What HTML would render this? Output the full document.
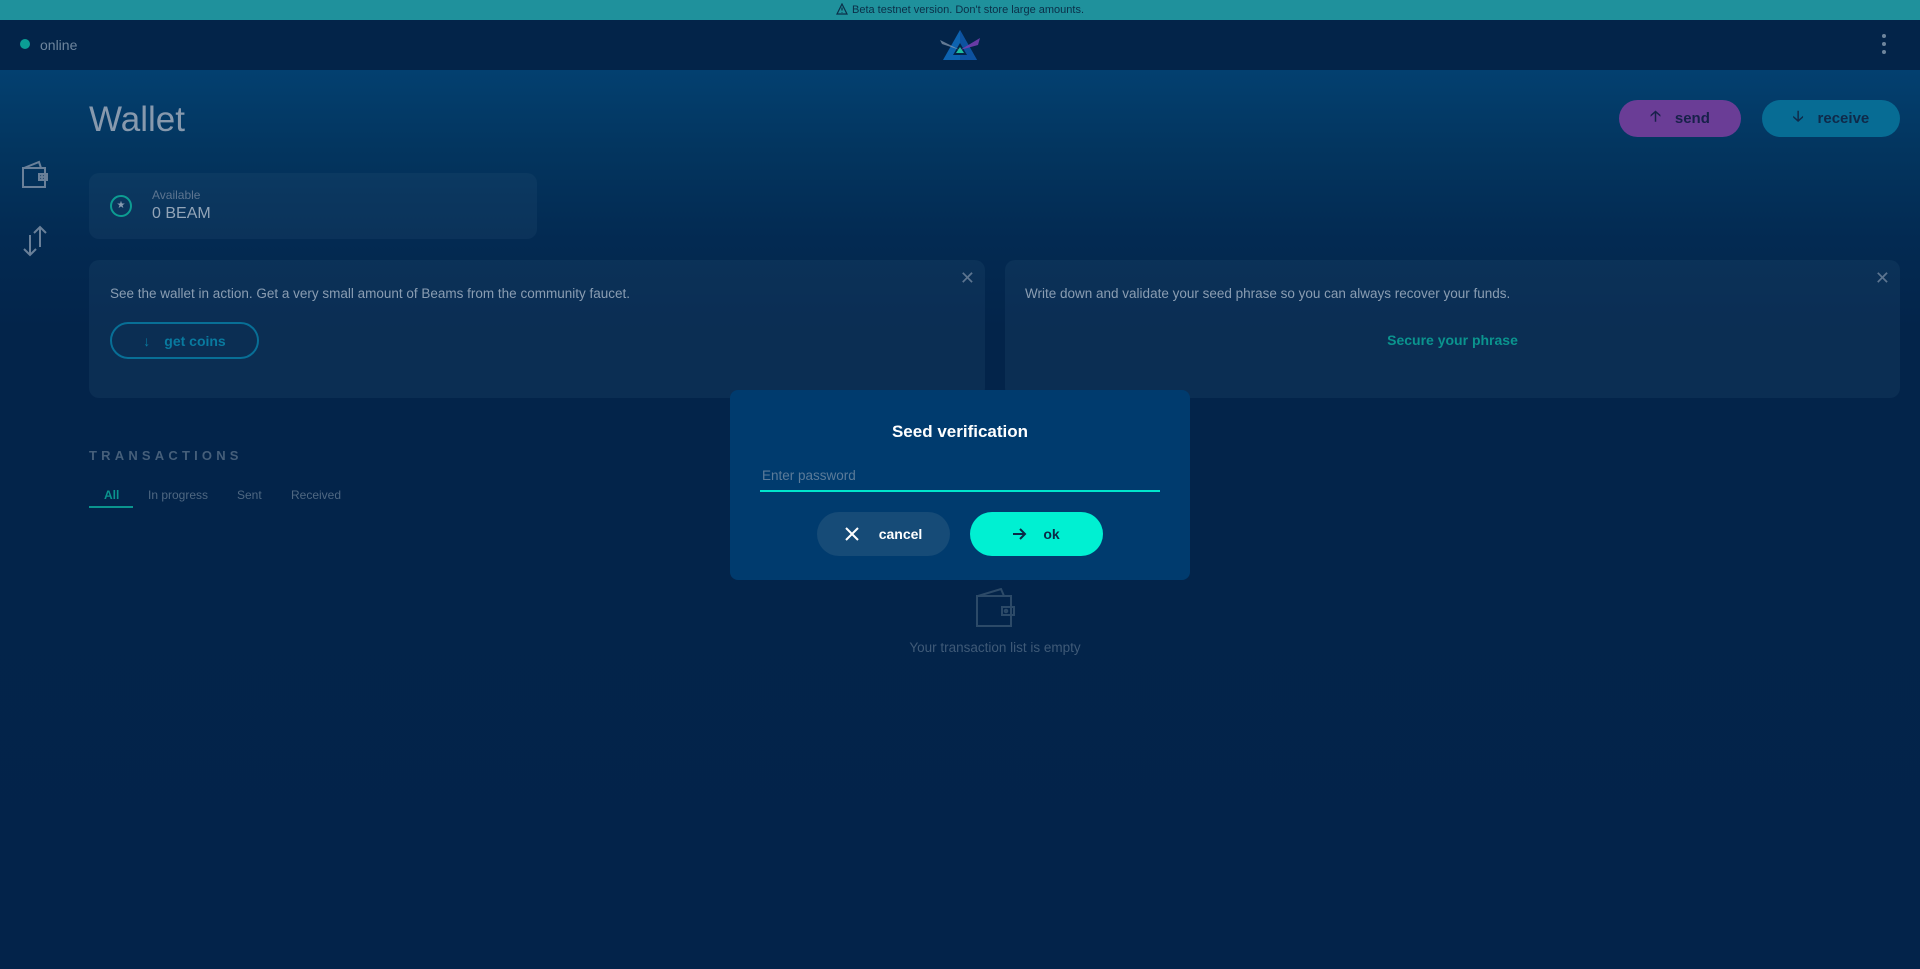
<!DOCTYPE html>
<html><head><meta charset="utf-8"><style>
*{margin:0;padding:0;box-sizing:border-box}
body{width:1920px;height:969px;overflow:hidden;background:#03234a;font-family:"Liberation Sans",sans-serif;position:relative}
.abs{position:absolute}
#banner{left:0;top:0;width:1920px;height:20px;background:#1f919c;color:#0b2f48;font-size:11px;text-align:center;line-height:20px}
#hdr{left:0;top:20px;width:1920px;height:50px;background:#032449}
#main{left:0;top:70px;width:1920px;height:899px;background:linear-gradient(#034070 0px,#03355f 80px,#032a52 170px,#03244a 260px,#03234a)}
.txt{color:#8a9db2}
.card{background:rgba(40,80,120,0.22);border-radius:10px}
.btn{border-radius:20px;font-weight:bold;font-size:15px;display:flex;align-items:center;justify-content:center;gap:14px}
</style></head><body>
<div id="banner" class="abs"><svg width="12" height="12" viewBox="0 0 12 12" style="vertical-align:-2px;margin-right:4px"><path d="M6 1L11 11H1Z" fill="none" stroke="#0b2f48" stroke-width="1.2"/><path d="M6 4.5V7.5M6 9V9.6" stroke="#0b2f48" stroke-width="1.2"/></svg>Beta testnet version. Don't store large amounts.</div>
<div id="hdr" class="abs">
 <div class="abs" style="left:20px;top:19px;width:10px;height:10px;border-radius:50%;background:#0b9e95"></div>
 <div class="abs txt" style="left:40px;top:17px;font-size:14px;color:#6e859d">online</div>
 <svg class="abs" style="left:938px;top:8px" width="44" height="34" viewBox="0 0 44 34"><path d="M22 2L39 32H5Z" fill="#0d63b0"/><path d="M22 2L39 32H22Z" fill="#0d52a0"/><path d="M22 15L29 27H15Z" fill="#032449"/><path d="M22 19L26 25H18Z" fill="#1fbf9f"/><path d="M2 12L22 22L4 16Z" fill="#8f9fb5" opacity="0.7"/><path d="M42 10L22 22L40 17Z" fill="#7a3fb5" opacity="0.85"/></svg>
 <div class="abs" style="left:1882px;top:14px;width:4px;height:4px;border-radius:2px;background:#6e859d;box-shadow:0 8px 0 #6e859d,0 16px 0 #6e859d"></div>
</div>
<div id="main" class="abs"></div>
<svg class="abs" style="left:20px;top:160px" width="30" height="30" viewBox="0 0 30 30" fill="none" stroke="#6a8099" stroke-width="2"><path d="M3 8H25V27H3Z"/><path d="M4 8L19 2L21 8"/><path d="M19 14H27V20H19Z"/><circle cx="22" cy="17" r="1"/></svg>
<svg class="abs" style="left:20px;top:225px" width="30" height="32" viewBox="0 0 30 32" fill="none" stroke="#6a8099" stroke-width="2"><path d="M10 10V30M4 24L10 30L16 24"/><path d="M20 22V2M14 8L20 2L26 8"/></svg>
<div class="abs" style="left:89px;top:100px;font-size:35px;color:#8799ad">Wallet</div>
<div class="abs btn" style="left:1619px;top:100px;width:122px;height:37px;background:#6a3d96;color:#17214a"><span>🡡</span>send</div>
<div class="abs btn" style="left:1762px;top:100px;width:138px;height:37px;background:#076c94;color:#0f2a4a"><span>🡣</span>receive</div>
<div class="abs card" style="left:89px;top:173px;width:448px;height:66px">
 <div class="abs" style="left:21px;top:22px;width:22px;height:22px;border-radius:50%;border:2px solid #0d9c92;color:#8a9db2;font-size:10px;text-align:center;line-height:18px">★</div>
 <div class="abs" style="left:63px;top:15px;font-size:12px;color:#5d7590">Available</div>
 <div class="abs" style="left:63px;top:32px;font-size:16px;color:#93a5b8">0 BEAM</div>
</div>
<div class="abs card" style="left:89px;top:260px;width:896px;height:138px">
 <div class="abs" style="left:21px;top:26px;font-size:13.5px;color:#8a9db2">See the wallet in action. Get a very small amount of Beams from the community faucet.</div>
 <div class="abs" style="right:10px;top:8px;font-size:18px;color:#5d7590">✕</div>
 <div class="abs btn" style="left:21px;top:62px;width:149px;height:37px;border:2px solid #086f96;color:#097a9f;font-size:14px"><span>↓</span>get coins</div>
</div>
<div class="abs card" style="left:1005px;top:260px;width:895px;height:138px">
 <div class="abs" style="left:20px;top:26px;font-size:13.5px;color:#8a9db2">Write down and validate your seed phrase so you can always recover your funds.</div>
 <div class="abs" style="right:10px;top:8px;font-size:18px;color:#5d7590">✕</div>
 <div class="abs" style="left:0;width:100%;top:72px;text-align:center;font-size:14px;font-weight:bold;color:#0b948e">Secure your phrase</div>
</div>
<div class="abs" style="left:89px;top:448px;font-size:13px;font-weight:bold;letter-spacing:4.2px;color:#465f7a">TRANSACTIONS</div>
<div class="abs" style="left:104px;top:488px;font-size:12px;font-weight:bold;color:#0b948e">All</div>
<div class="abs" style="left:89px;top:506px;width:44px;height:2px;background:#0b948e"></div>
<div class="abs" style="left:148px;top:488px;font-size:12px;color:#4f6882">In progress</div>
<div class="abs" style="left:237px;top:488px;font-size:12px;color:#4f6882">Sent</div>
<div class="abs" style="left:291px;top:488px;font-size:12px;color:#4f6882">Received</div>
<svg class="abs" style="left:975px;top:588px" width="40" height="40" viewBox="0 0 40 40" fill="none" stroke="#2c4a68" stroke-width="2"><path d="M2 8H36V38H2Z"/><path d="M3 8L26 1L29 8"/><path d="M27 19H39V27H27Z"/><circle cx="31" cy="23" r="1.3"/></svg>
<div class="abs" style="left:0;width:1990px;top:640px;text-align:center;font-size:13.5px;color:#3f5a77">Your transaction list is empty</div>
<div class="abs" style="left:730px;top:390px;width:460px;height:190px;background:#003b6e;border-radius:8px">
 <div class="abs" style="left:0;width:100%;top:32px;text-align:center;font-size:17px;font-weight:bold;color:#fff">Seed verification</div>
 <div class="abs" style="left:32px;top:78px;font-size:13.5px;color:#5b7b99">Enter password</div>
 <div class="abs" style="left:30px;top:100px;width:400px;height:2px;background:#00e5cc"></div>
 <div class="abs btn" style="left:87px;top:122px;width:133px;height:44px;border-radius:22px;background:#164b77;color:#fff;font-size:14px;gap:20px"><svg width="14" height="14" viewBox="0 0 14 14" stroke="#fff" stroke-width="2"><path d="M1 1L13 13M13 1L1 13"/></svg>cancel</div>
 <div class="abs btn" style="left:240px;top:122px;width:133px;height:44px;border-radius:22px;background:#00f0d2;color:#0a2a46;font-size:14px;gap:16px"><svg width="14" height="12" viewBox="0 0 14 12" fill="none" stroke="#0a2a46" stroke-width="2"><path d="M0 6H12M7 1L12 6L7 11"/></svg>ok</div>
</div>
</body></html>
